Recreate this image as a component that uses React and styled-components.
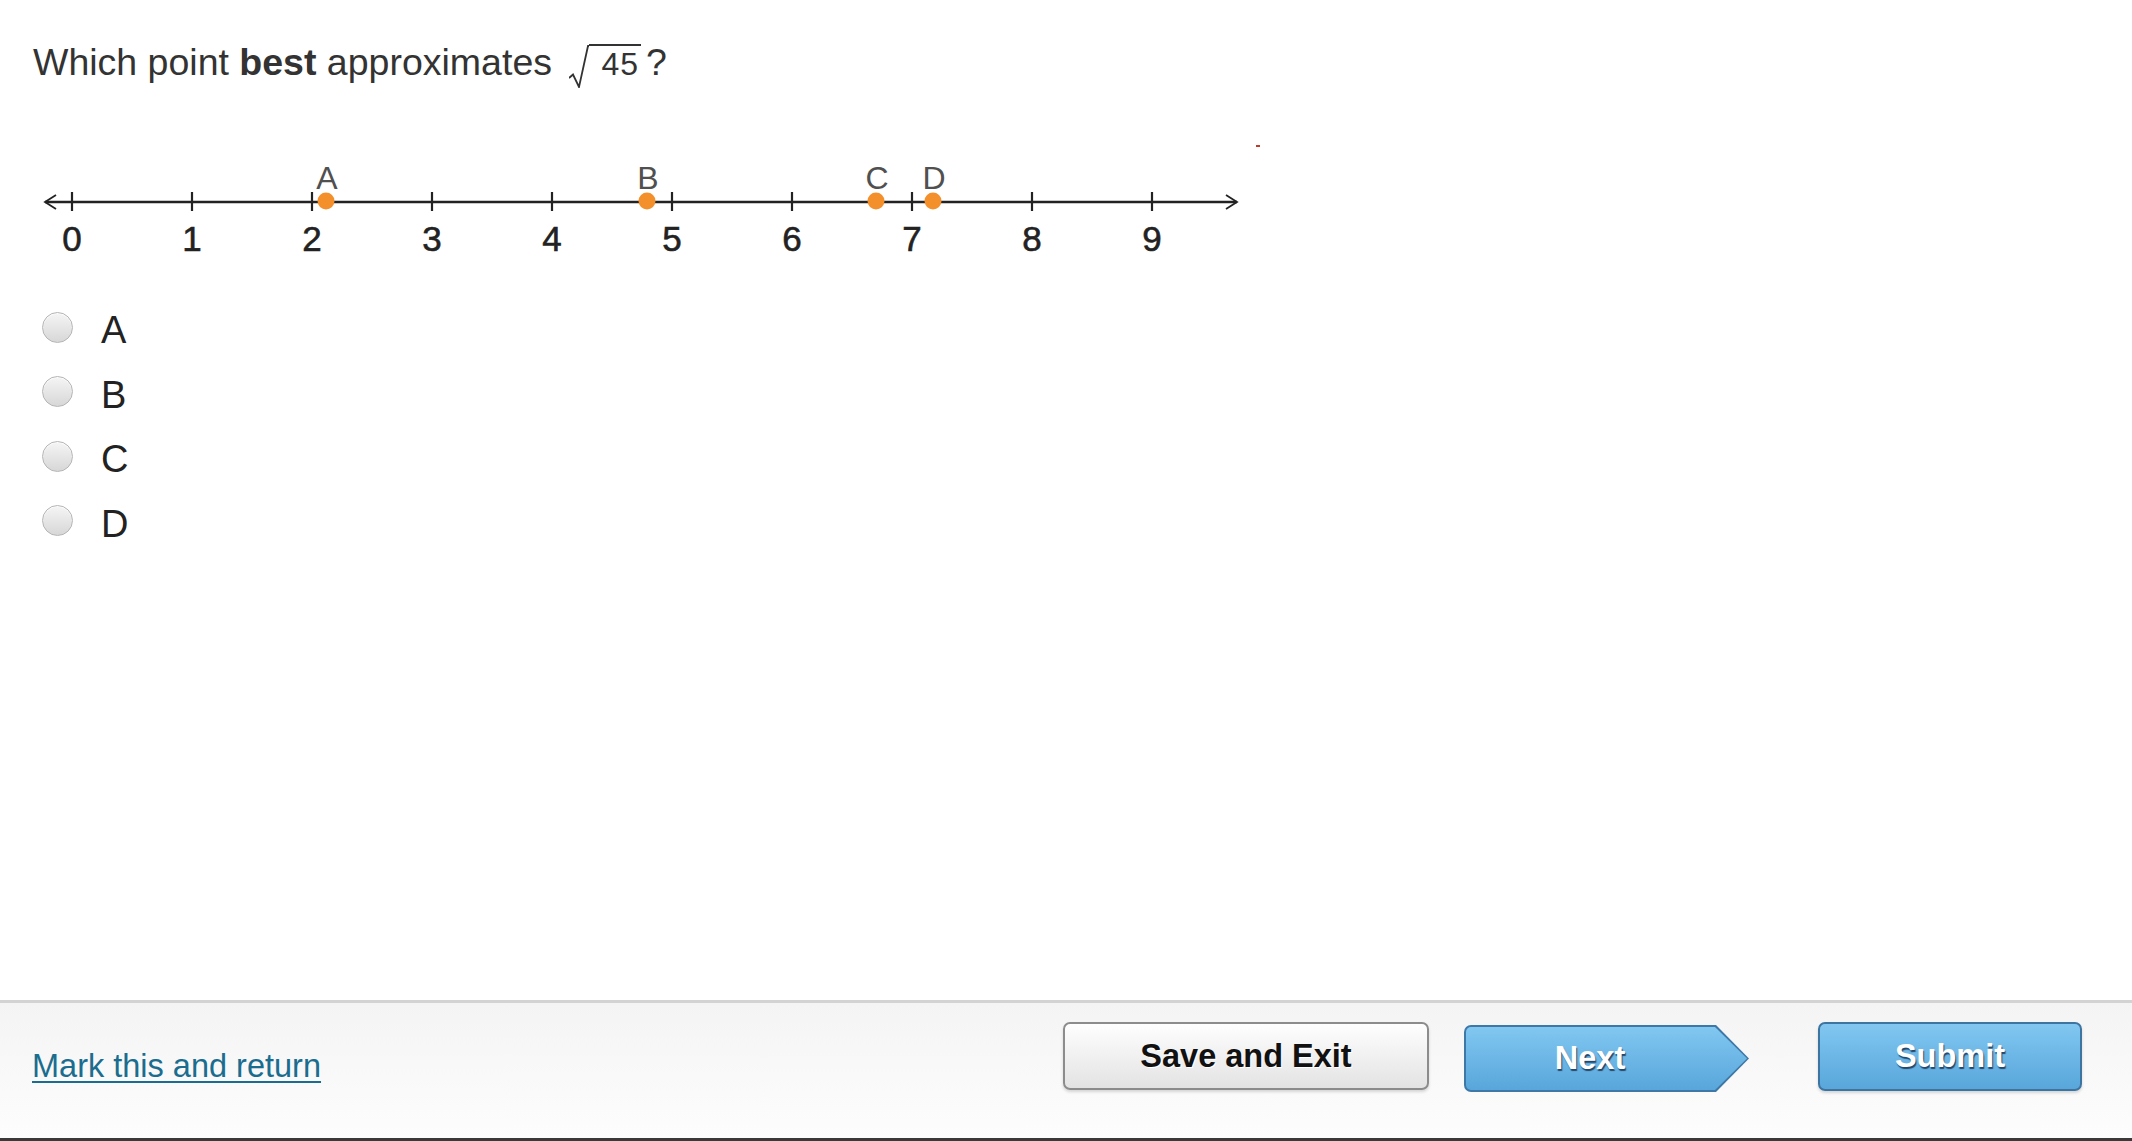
import React from 'react'
import styled, { createGlobalStyle } from 'styled-components'

const GlobalStyle = createGlobalStyle`
   html, body, #root {
      height: 100%;
   }
   body {
      margin: 0;
      background: #fff;
      font-family: "Liberation Sans", Arial, sans-serif;
   }
`

const ticks = [0, 1, 2, 3, 4, 5, 6, 7, 8, 9]
const points = [
   { label: 'A', x: 326 },
   { label: 'B', x: 647 },
   { label: 'C', x: 876 },
   { label: 'D', x: 933 },
]
const options = ['A', 'B', 'C', 'D']

const NumberLine = () => (
   <LineSvg viewBox="0 140 1280 120" width="1280" height="120">
      <line x1="45" y1="202" x2="1237" y2="202" stroke="#222" strokeWidth="2.4" />
      <polyline points="56,195 45,202 56,209" fill="none" stroke="#222" strokeWidth="1.8" />
      <polyline points="1226,195 1237,202 1226,209" fill="none" stroke="#222" strokeWidth="1.8" />
      {ticks.map((t) => (
         <g key={t}>
            <line x1={72 + t * 120} y1="192" x2={72 + t * 120} y2="211" stroke="#222" strokeWidth="2.2" />
            <TickText x={72 + t * 120} y="251" textAnchor="middle">
               {t}
            </TickText>
         </g>
      ))}
      {points.map((p) => (
         <g key={p.label}>
            <circle cx={p.x} cy="201" r="8.5" fill="#f4902c" />
            <PointText x={p.x + 1} y="189" textAnchor="middle">
               {p.label}
            </PointText>
         </g>
      ))}
      <rect x="1256" y="145" width="4" height="2" fill="#c0392b" />
   </LineSvg>
)

const App = () => {
   return (
      <Page>
         <GlobalStyle />
         <Main>
            <Question>
               Which point <b>best</b> approximates{' '}
               <Radical viewBox="0 0 20 43">
                  <polyline points="0,33 4,29.5 10,42 19,1 20,1" fill="none" stroke="#333" strokeWidth="1.8" />
               </Radical>
               <RootBody>45</RootBody>?
            </Question>
            <NumberLine />
            <Options>
               {options.map((o) => (
                  <OptionRow key={o}>
                     <Radio />
                     <OptionLabel>{o}</OptionLabel>
                  </OptionRow>
               ))}
            </Options>
         </Main>
         <Footer>
            <MarkLink href="#">Mark this and return</MarkLink>
            <Actions>
               <SaveButton>Save and Exit</SaveButton>
               <NextButton>
                  <NextFace>Next</NextFace>
               </NextButton>
               <SubmitButton>Submit</SubmitButton>
            </Actions>
         </Footer>
      </Page>
   )
}
export default App

const Page = styled.div`
   display: flex;
   flex-direction: column;
   height: 100vh;
`
const Main = styled.div`
   flex: 1;
`
const Question = styled.div`
   padding: 39px 0 0 33px;
   font-size: 37.5px;
   line-height: 46px;
   color: #333;
   b {
      font-weight: 700;
   }
`
const Radical = styled.svg`
   width: 20px;
   height: 43px;
   margin-left: 7px;
   vertical-align: -13px;
`
const RootBody = styled.span`
   border-top: 2px solid #333;
   font-size: 32px;
   letter-spacing: 1px;
   padding: 0 2px 0 12px;
   margin-right: 5px;
`
const LineSvg = styled.svg`
   display: block;
   margin-top: 52px;
`
const TickText = styled.text`
   font-family: "Liberation Sans", Arial, sans-serif;
   font-size: 35px;
   fill: #222;
   stroke: #222;
   stroke-width: 0.6px;
`
const PointText = styled.text`
   font-family: "Liberation Sans", Arial, sans-serif;
   font-size: 32px;
   fill: #505050;
`
const Options = styled.div`
   margin-top: 35px;
   padding-left: 42px;
`
const OptionRow = styled.label`
   display: flex;
   align-items: center;
   height: 64.5px;
   cursor: pointer;
`
const Radio = styled.span`
   box-sizing: border-box;
   width: 31px;
   height: 31px;
   border-radius: 50%;
   border: 1px solid #b5b5b5;
   background: linear-gradient(#f5f5f5, #d7d7d7);
   box-shadow: inset 0 1px 1px rgba(255, 255, 255, 0.8);
`
const OptionLabel = styled.span`
   margin-left: 28px;
   margin-top: 7px;
   font-size: 38px;
   color: #222;
`
const Footer = styled.div`
   box-sizing: border-box;
   height: 141px;
   display: flex;
   align-items: flex-start;
   padding: 19px 50px 0 32px;
   border-top: 3px solid #d3d3d3;
   border-bottom: 3px solid #3a3a3a;
   background: linear-gradient(#f4f4f4, #fdfdfd);
`
const MarkLink = styled.a`
   margin-top: 26px;
   font-size: 32.5px;
   line-height: 36px;
   color: #1b6d8f;
   text-decoration: underline;
   text-decoration-thickness: 2px;
   text-underline-offset: 4px;
`
const Actions = styled.div`
   margin-left: auto;
   display: flex;
   align-items: flex-start;
`
const ButtonText = `
   font-family: "Liberation Sans", Arial, sans-serif;
   font-size: 32.5px;
   font-weight: 700;
   cursor: pointer;
`
const SaveButton = styled.button`
   ${ButtonText}
   box-sizing: border-box;
   width: 366px;
   height: 68px;
   border: 2px solid #8c8c8c;
   border-radius: 7px;
   background: linear-gradient(#fefefe, #e3e3e3);
   box-shadow: 0 2px 3px rgba(0, 0, 0, 0.15);
   color: #111;
   text-shadow: 1px 1px 0 #fff;
`
const NextButton = styled.button`
   ${ButtonText}
   box-sizing: border-box;
   margin: 3px 0 0 35px;
   width: 285px;
   height: 67px;
   padding: 2px;
   border: none;
   border-radius: 7px 0 0 7px;
   background: #3d78a7;
   clip-path: polygon(0 0, 252px 0, 100% 50%, 252px 100%, 0 100%);
`
const NextFace = styled.span`
   box-sizing: border-box;
   display: flex;
   align-items: center;
   justify-content: center;
   width: 100%;
   height: 100%;
   padding-right: 33px;
   border-radius: 5px 0 0 5px;
   background: linear-gradient(#81c7f1, #58a6db);
   clip-path: polygon(0 0, 249px 0, 100% 50%, 249px 100%, 0 100%);
   color: #fff;
   text-shadow: 1px 2px 1px #24476a;
`
const SubmitButton = styled.button`
   ${ButtonText}
   box-sizing: border-box;
   margin-left: 69px;
   width: 264px;
   height: 69px;
   border: 2px solid #3d75a0;
   border-radius: 7px;
   background: linear-gradient(#81c7f1, #58a6db);
   box-shadow: 0 2px 3px rgba(0, 0, 0, 0.15);
   color: #fff;
   text-shadow: 1px 2px 1px #24476a;
`
